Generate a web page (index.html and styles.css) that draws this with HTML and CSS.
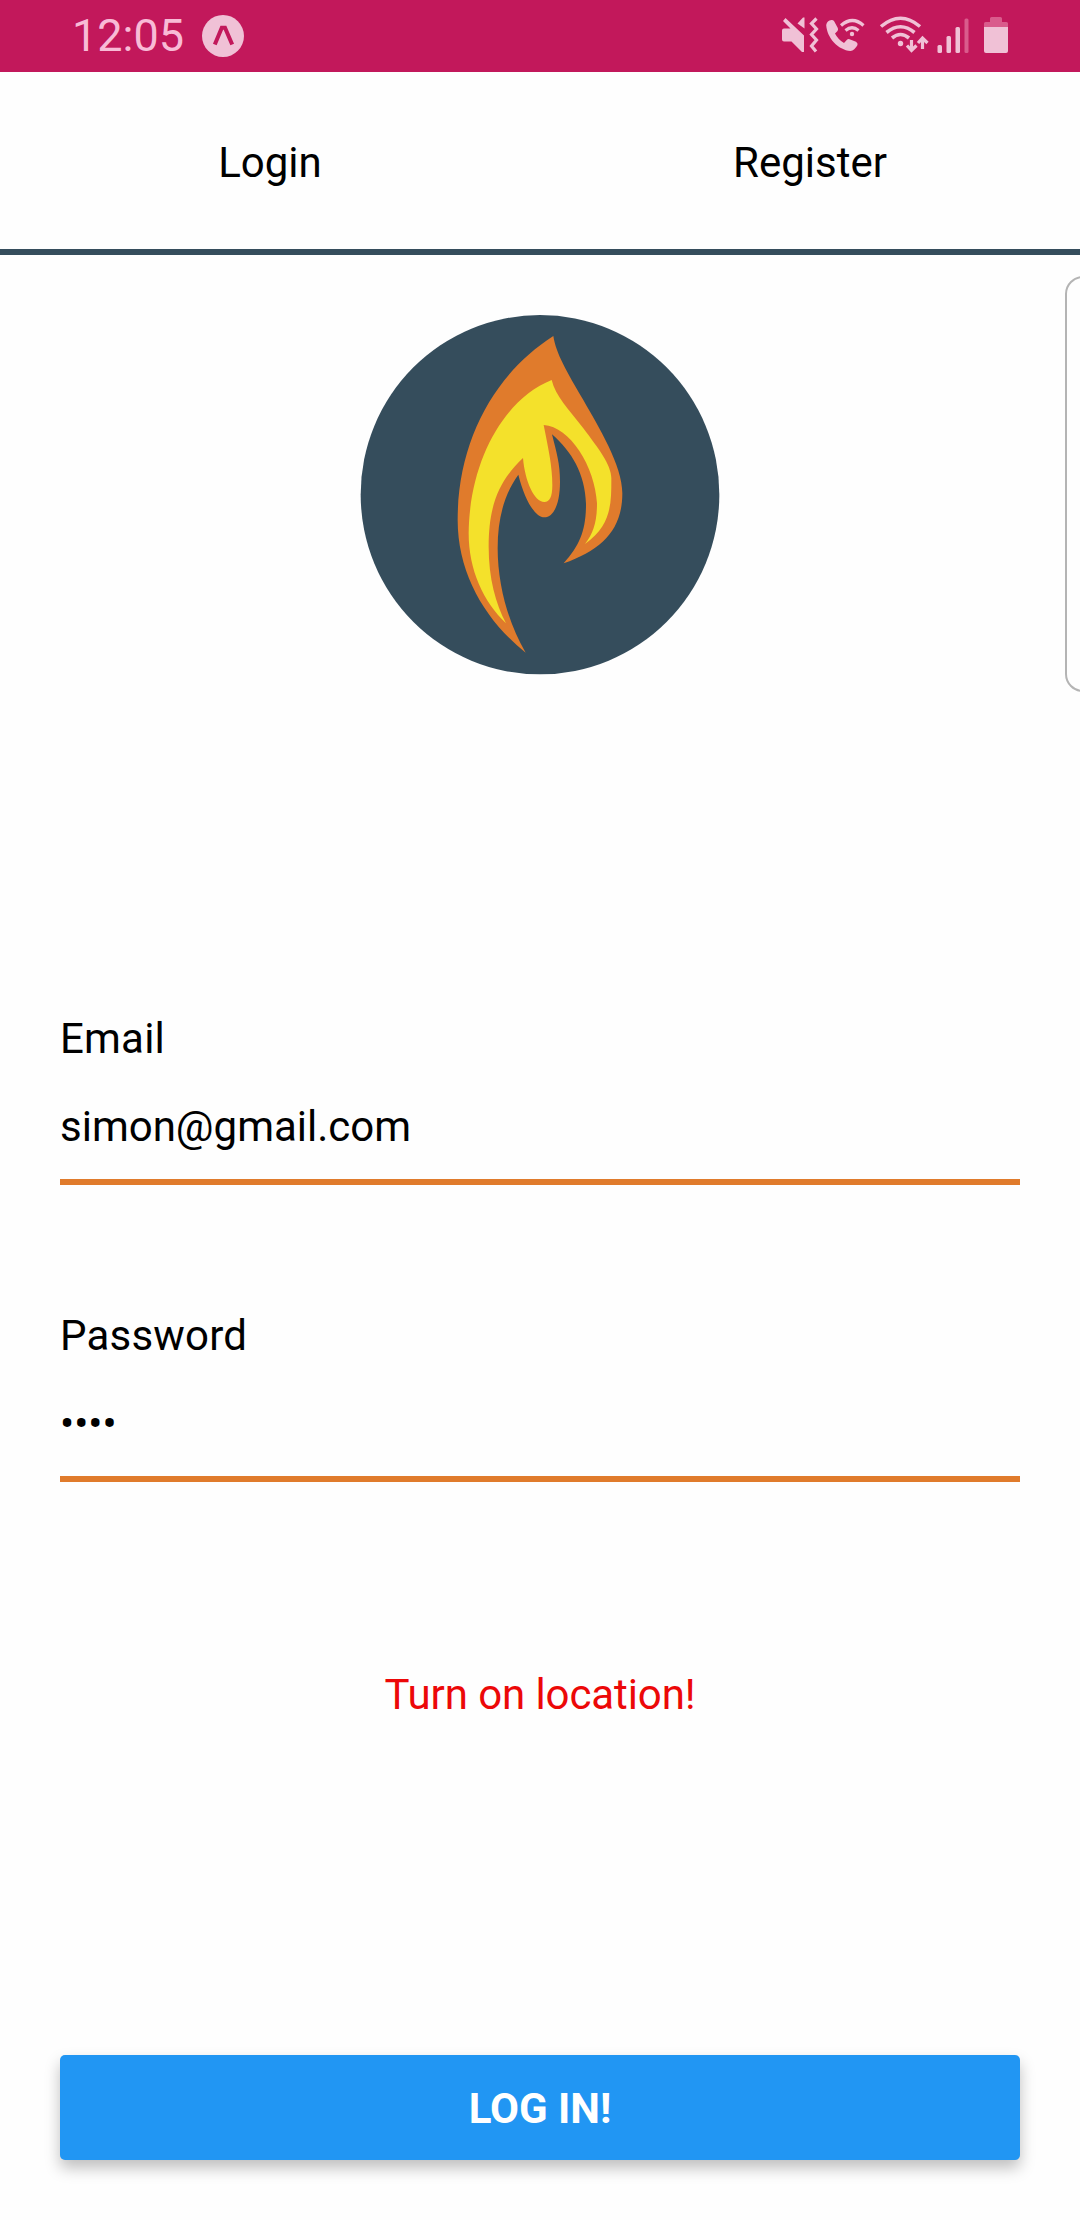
FILE: index.html
```html
<!DOCTYPE html>
<html lang="en">
<head>
<meta charset="utf-8">
<title>Login</title>
<link rel="stylesheet" href="styles.css">
</head>
<body>
<div class="screen">
  <header class="status">
    <span class="clock">12:05</span>
    <svg class="status-app" viewBox="200 12 46 46" width="46" height="46">
      <circle cx="223" cy="35" r="21" fill="#f0c1d6"/>
      <path d="M214.8 43.5 L221.8 26.800 H225 L232.2 43.5" fill="none" stroke="#c2185b" stroke-width="4"/>
    </svg>
    <svg class="status-icons" viewBox="780 0 230 72" width="230" height="72" fill="none" stroke="#f0c1d6">
      <g fill="#f0c1d6" stroke="none">
        <path d="M785.5 18 L804 35.5 V52 H802 L791.500 41.500 H784 Q782 41.500 782 39.500 V30.500 Q782 28.500 784 28.500 H790.500 L783 21 Z"/>
        <path d="M804.500 17.500 V28.500 L797.500 23.500 L803 17.500 Z"/>
        <path d="M831.500 20 Q827 20.500 826.200 25 C827 38 838 50 850.500 51 Q854.500 50.500 857.500 45 Q858 43 856 41.800 L849.500 39.200 Q848 38.800 846.500 40.200 L844 43 Q838 39.500 835 33.500 L837.500 31 Q838.500 29.500 837.800 28 L834 21 Q833 19.800 831.500 20 Z"/>
        <circle cx="852" cy="34" r="2.200"/>
        <circle cx="900.500" cy="43.500" r="2.700"/>
        <rect x="937.500" y="45" width="4.500" height="8" rx="1.500"/>
        <rect x="946.500" y="36" width="4.500" height="17" rx="1.500"/>
        <rect x="955.500" y="27" width="4.500" height="26" rx="1.500"/>
        <rect x="964.500" y="18.500" width="4" height="34.500" rx="1.500" fill="#d95b8c"/>
        <path d="M984 27 V23.500 Q984 22 985.500 22 H990 V18.500 Q990 17 991.500 17 H1000.500 Q1002 17 1002 18.500 V22 H1006.500 Q1008 22 1008 23.500 V27 Z" fill="#d95b8c"/>
        <path d="M984 27 H1008 V51 Q1008 53 1006 53 H986 Q984 53 984 51 Z"/>
      </g>
      <path d="M816.500 18.500 L811.500 23.500 L816.500 29 L811.500 34.500 L816.500 40 L811.500 46 L816 51.500" stroke-width="3.200"/>
      <path d="M845.500 30.500 Q852 25 858.500 30.500 M841 25.500 Q852.500 15.500 863.500 25.500" stroke-width="3.200"/>
      <path d="M881 26.500 Q900.500 10 920 26.500 M886.500 32.500 Q900.500 21 914.500 32.500 M892 38 Q900.500 31 909 38" stroke-width="3.600"/>
      <path d="M911.500 40 V50 M907 45.500 L911.500 50.500 L916.500 45.500 M922.500 49 V38.500 M918 43 L922.500 38 L927.500 43" stroke-width="3.200"/>
    </svg>
  </header>

  <nav class="tabs">
    <a class="tab">Login</a>
    <a class="tab">Register</a>
  </nav>

  <main class="content">
    <svg class="logo" viewBox="0 0 1140 1170" width="380" height="390">
      <ellipse cx="570" cy="584" rx="538" ry="539" fill="#354d5c"/>
      <path fill="#e07b2c" d="M610 108 C618 160 650 215 700 300 C745 380 817 495 817 580 C817 690 755 750 641 790 C690 735 708 690 708 612 C705 520 665 455 606 403 C620 460 630 490 630 545 C630 610 612 652 583 652 C555 652 524 600 505 524 C465 580 443 650 443 745 C443 855 475 970 527 1058 C410 965 323 825 323 660 C323 420 435 220 610 108 Z"/>
      <path fill="#f4e12b" d="M605 240 C617 290 655 325 700 385 C745 445 784 495 784 535 C784 610 785 675 705 732 C730 700 741 665 741 610 C735 500 660 380 581 375 C595 445 607 500 607 555 C607 592 599 606 583 606 C553 606 525 545 519 474 C450 540 416 610 416 740 C416 835 437 910 468 970 C400 905 356 810 356 700 C358 480 465 295 605 240 Z"/>
    </svg>

    <form class="form">
      <div class="field">
        <span class="label">Email</span>
        <span class="value">simon@gmail.com</span>
      </div>
      <div class="field">
        <span class="label">Password</span>
        <span class="value">••••</span>
      </div>
      <p class="message">Turn on location!</p>
      <button class="submit" type="button">LOG IN!</button>
    </form>
  </main>
  <div class="edge-handle"></div>
</div>
</body>
</html>
```
FILE: styles.css
```css
* {
  box-sizing: border-box;
}

body {
  margin: 0;
  background: #fefefe;
  color: #000;
  font-family: Roboto, "Liberation Sans", sans-serif;
  font-size: 42px;
  line-height: 50px;
}

.screen {
  position: relative;
  display: flex;
  flex-direction: column;
  width: 1080px;
  height: 2220px;
  overflow: hidden;
}

.status {
  display: flex;
  align-items: center;
  height: 72px;
  padding: 0 70px 0 72px;
  background: #c2185b;
}

.clock {
  width: 112px;
  color: #f8bbd6;
  font-size: 45px;
}

.status-app {
  margin-left: 16px;
}

.status-icons {
  margin-left: auto;
}

.tabs {
  display: flex;
  height: 183px;
  padding-top: 66px;
  border-bottom: 6px solid #354d5c;
}

.tab {
  flex: 1;
  text-align: center;
}

.content {
  display: flex;
  flex-direction: column;
  align-items: center;
  padding-top: 45px;
}

.logo {
  display: block;
}

.form {
  display: flex;
  flex-direction: column;
  width: 960px;
  padding-top: 324px;
}

.field {
  display: flex;
  flex-direction: column;
  gap: 38px;
  height: 171px;
  margin-bottom: 126px;
  border-bottom: 6px solid #e07b2c;
}

.label {
  letter-spacing: 0.2px;
}

.message {
  margin: 62px 0 0;
  color: #ec0808;
  letter-spacing: -0.1px;
  text-align: center;
}

.submit {
  height: 105px;
  margin-top: 335px;
  padding: 3px 0 0;
  border: 0;
  border-radius: 5px;
  background: #2196f3;
  box-shadow: 0 8px 15px rgba(0, 0, 0, 0.25);
  color: #fff;
  font: 700 42px/50px Roboto, "Liberation Sans", sans-serif;
}

.edge-handle {
  position: absolute;
  top: 276px;
  right: -30px;
  width: 45px;
  height: 416px;
  border: 2px solid #b4b4b4;
  border-radius: 18px;
}
```
